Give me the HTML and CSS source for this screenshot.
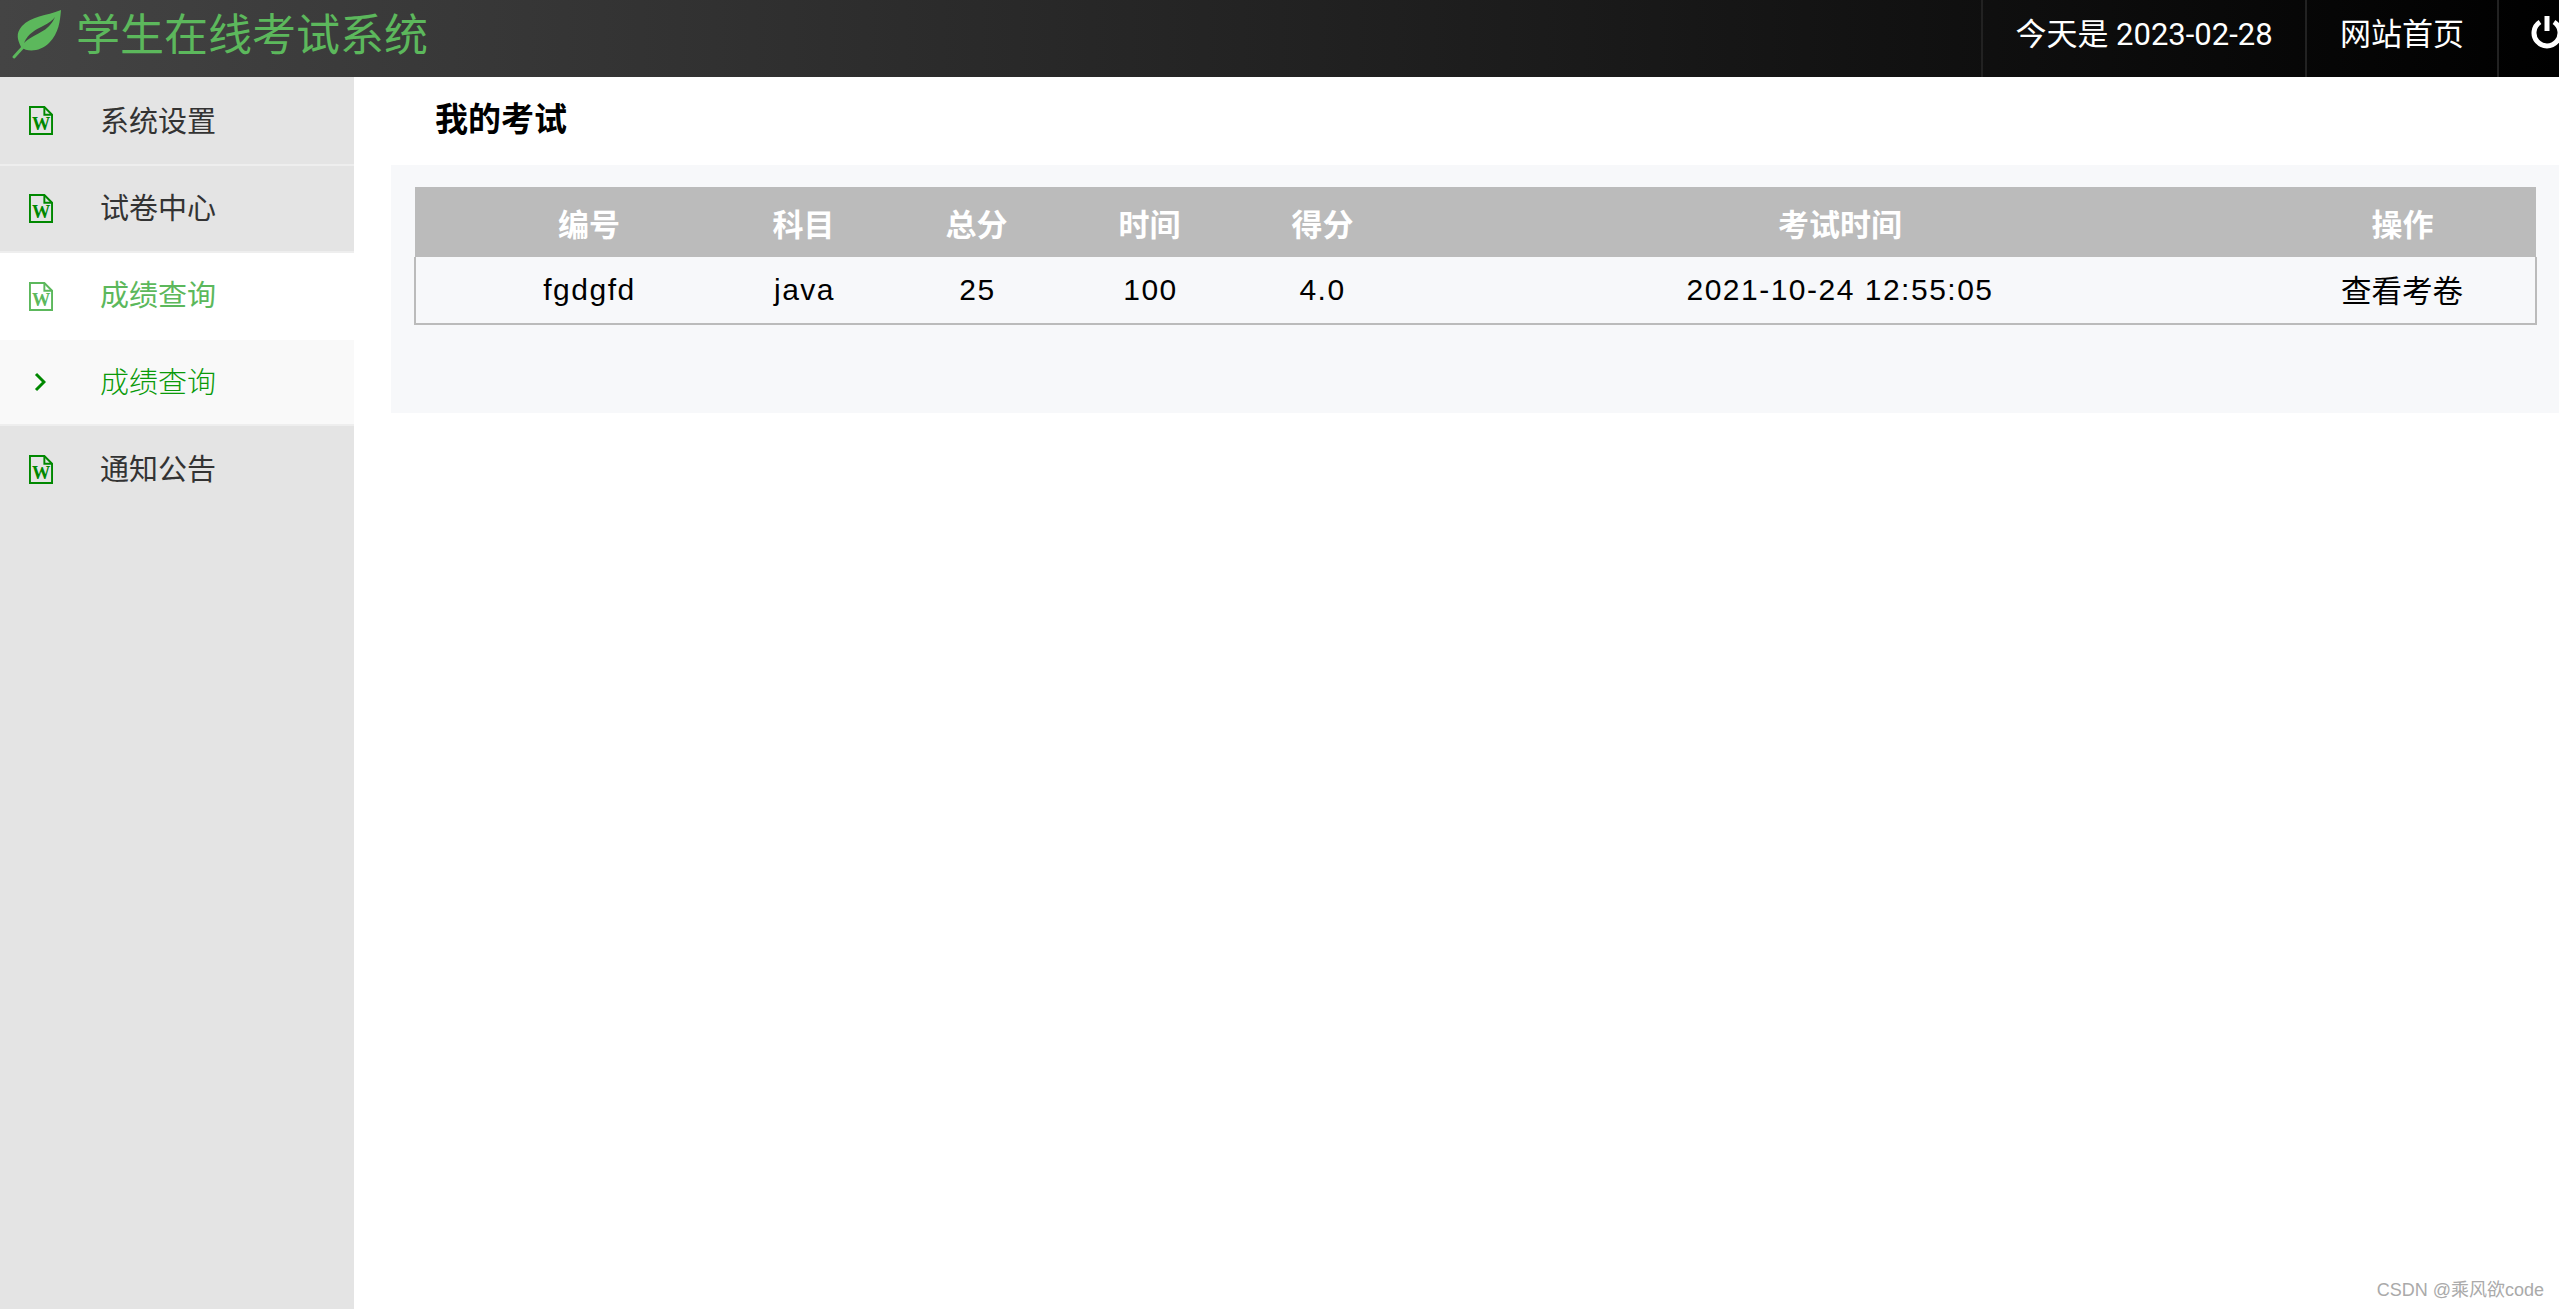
FILE: index.html
```html
<!DOCTYPE html>
<html lang="zh">
<head>
<meta charset="utf-8">
<title>学生在线考试系统</title>
<link rel="stylesheet" href="styles.css">
</head>
<body>
<header class="topbar">
  <div class="brand">
    <svg class="leaf" viewBox="0 0 64 64" aria-hidden="true">
      <path class="leaf-body" d="M61 9C46 15 31 15 22 25C15 33 18 39 21 46C28 52 41 50 49 42C59 32 60 20 61 9ZM24 42C28 32 37 28 43 25C49 22 53 19 55 16C52 23 47 28 41 31C34 35 29 37 24 42Z"/>
      <path class="leaf-stem" d="M14 56L24 45"/>
    </svg>
    <span class="brand-name">学生在线考试系统</span>
  </div>
  <nav class="topnav">
    <div class="topnav-item date">今天是 2023-02-28</div>
    <div class="topnav-item">网站首页</div>
    <div class="topnav-item power">
      <svg class="power-icon" viewBox="0 0 34 36" aria-hidden="true">
        <path d="M10 8A13 13 0 1 0 24 8"/>
        <path d="M17 2V17"/>
      </svg>
    </div>
  </nav>
</header>
<div class="layout">
  <aside class="sidebar">
    <div class="item first">
      <span class="item-icon"><svg class="doc" viewBox="0 0 25 30"><path d="M1 1H16L24 9V29H1Z"/><path d="M16 1V9H24"/><text x="12.5" y="25" class="doc-w">W</text></svg></span>
      <span class="item-label">系统设置</span>
    </div>
    <div class="item">
      <span class="item-icon"><svg class="doc" viewBox="0 0 25 30"><path d="M1 1H16L24 9V29H1Z"/><path d="M16 1V9H24"/><text x="12.5" y="25" class="doc-w">W</text></svg></span>
      <span class="item-label">试卷中心</span>
    </div>
    <div class="item active">
      <span class="item-icon"><svg class="doc" viewBox="0 0 25 30"><path d="M1 1H16L24 9V29H1Z"/><path d="M16 1V9H24"/><text x="12.5" y="25" class="doc-w">W</text></svg></span>
      <span class="item-label">成绩查询</span>
    </div>
    <div class="item sub">
      <span class="item-icon"><svg class="chevron" viewBox="0 0 12 20"><path d="M2 2L10 10L2 18"/></svg></span>
      <span class="item-label">成绩查询</span>
    </div>
    <div class="item last">
      <span class="item-icon"><svg class="doc" viewBox="0 0 25 30"><path d="M1 1H16L24 9V29H1Z"/><path d="M16 1V9H24"/><text x="12.5" y="25" class="doc-w">W</text></svg></span>
      <span class="item-label">通知公告</span>
    </div>
  </aside>
  <main class="content">
    <h2 class="page-title">我的考试</h2>
    <section class="panel">
      <table class="grades">
        <colgroup>
          <col class="c-id"><col class="c-num"><col class="c-num"><col class="c-num"><col class="c-num"><col class="c-time"><col class="c-op">
        </colgroup>
        <thead>
          <tr><th class="first-cell">编号</th><th>科目</th><th>总分</th><th>时间</th><th>得分</th><th>考试时间</th><th class="op-head">操作</th></tr>
        </thead>
        <tbody>
          <tr><td class="first-cell">fgdgfd</td><td class="num">java</td><td class="num">25</td><td class="num">100</td><td>4.0</td><td>2021-10-24 12:55:05</td><td class="op">查看考卷</td></tr>
        </tbody>
      </table>
    </section>
    <div class="watermark">CSDN @乘风欲code</div>
  </main>
</div>
</body>
</html>
```

FILE: styles.css
```css
* { box-sizing: border-box; }
html, body { margin: 0; height: 100%; }
body {
  display: flex;
  flex-direction: column;
  min-height: 100vh;
  overflow: hidden;
  background: #fff;
  font-family: "Liberation Sans", "Noto Sans CJK SC", sans-serif;
}
.topbar {
  display: flex;
  justify-content: space-between;
  height: 77px;
  flex: none;
  background: linear-gradient(to right, #444 0%, #000 100%);
}
.brand { display: flex; align-items: center; gap: 12px; }
.leaf { width: 64px; height: 64px; margin-top: -12px; }
.leaf-body { fill: #5cb85c; fill-rule: evenodd; }
.leaf-stem { fill: none; stroke: #5cb85c; stroke-width: 3; stroke-linecap: round; }
.brand-name { margin-bottom: 13px; color: #5cb85c; font-size: 44px; font-weight: 400; font-family: "Noto Sans CJK SC", sans-serif; }
.topnav { display: flex; }
.topnav-item {
  display: flex;
  align-items: center;
  padding: 0 33px 14px;
  border-left: 2px solid #222;
  color: #fff;
  font-size: 31px;
  font-family: Roboto, "Noto Sans CJK SC", sans-serif;
  font-weight: 400;
}
.date { width: 324px; justify-content: center; padding: 0 0 14px; }
.power { width: 62px; padding: 0 0 14px 31px; }
.power-icon { width: 34px; height: 36px; flex: none; fill: none; stroke: #fff; stroke-width: 5; }
.layout { display: flex; flex: 1; min-height: 0; }
.sidebar { width: 354px; flex: none; background: #e4e4e4; }
.item {
  display: flex;
  align-items: center;
  height: 87px;
  padding-left: 28px;
  border-bottom: 2px solid #eee;
  color: #333;
  font-size: 29px;
  font-weight: 400;
  font-family: "Noto Sans CJK SC", sans-serif;
}
.item.first { height: 89px; }
.item.first .item-label { margin-bottom: 3px; }
.item.active { background: #fff; color: #5cb85c; border-bottom: 0; }
.item.active .item-label { margin-bottom: 7px; }
.item.sub { background: #f9f9f9; color: #0a9a0a; height: 86px; }
.item.sub .item-label { font-weight: 300; }
.item.last { border-bottom: 0; }
.item-icon { display: flex; justify-content: center; width: 26px; margin-right: 46px; }
.item-label { margin-bottom: 5px; }
.doc { width: 24px; height: 29px; fill: none; stroke: #080; stroke-width: 2; }
.doc-w { fill: #080; stroke: none; font: 700 19px "Liberation Serif", serif; text-anchor: middle; }
.active .doc { stroke: #5cb85c; }
.active .doc-w { fill: #5cb85c; }
.chevron { width: 12px; height: 20px; margin-left: -2px; fill: none; stroke: #080; stroke-width: 3; }
.content { position: relative; flex: 1; min-width: 0; padding-left: 37px; }
.page-title {
  display: flex;
  align-items: center;
  height: 88px;
  margin: 0;
  padding: 0 0 8px 44px;
  font-size: 33px;
  font-weight: 700;
  color: #000;
  font-family: "Noto Sans CJK SC", sans-serif;
}
.panel { height: 248px; padding: 22px 23px 0 23px; background: #f7f8fa; }
.grades { width: 100%; table-layout: fixed; border-collapse: collapse; font-size: 30px; letter-spacing: 1.5px; }
.c-id { width: 302px; }
.c-num { width: 173px; }
.c-time { width: 862px; }
.c-op { width: 265px; }
.grades th {
  height: 70px;
  padding: 0;
  background: #bbb;
  color: #fff;
  font-size: 31px;
  font-weight: 700;
  letter-spacing: 0;
}
.grades td { height: 67px; padding: 0; text-align: center; color: #000; }
.grades td.num { padding-left: 2px; }
.grades tbody tr { border: 2px solid #bbb; border-top: 0; }
.grades .first-cell { padding-left: 46px; }
.grades .op-head { padding-right: 2px; }
.grades .op { padding: 0 2px 2px 0; letter-spacing: 0; font-size: 30.5px; font-family: "Noto Sans CJK SC", sans-serif; font-weight: 400; }
.watermark { position: absolute; right: 15px; bottom: 8px; color: #aaa; font-size: 18px; }
```
